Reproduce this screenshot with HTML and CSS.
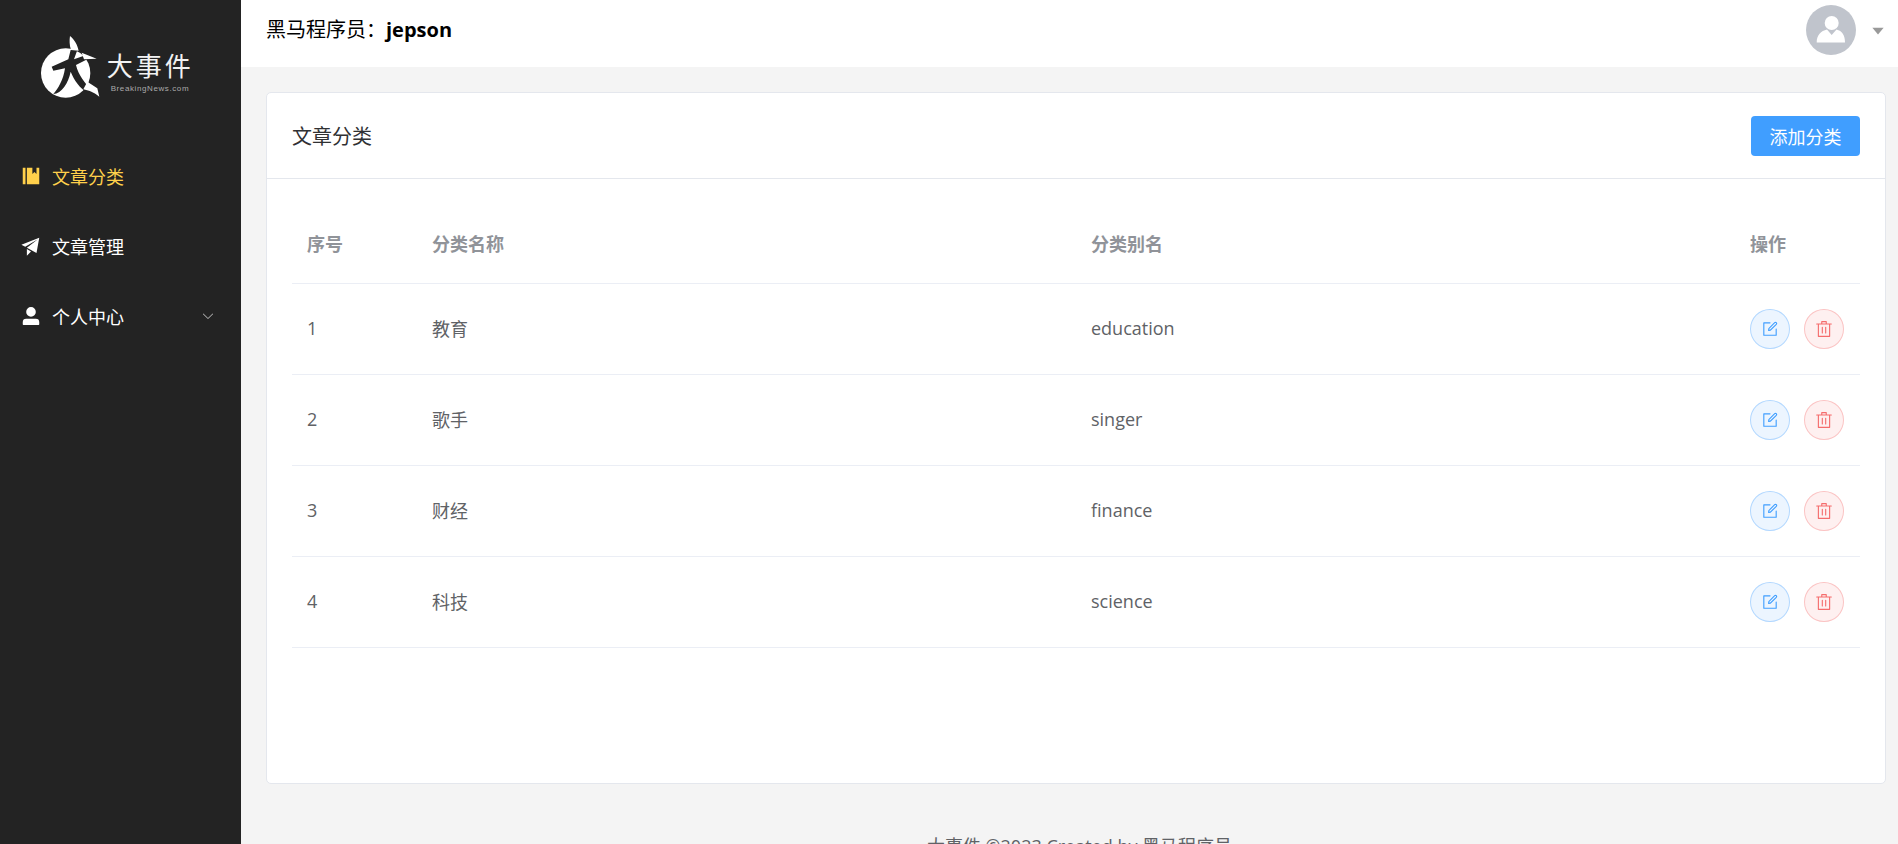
FILE: index.html
```html
<!DOCTYPE html>
<html lang="zh-CN">
<head>
<meta charset="utf-8">
<title>大事件</title>
<link rel="stylesheet" href="styles.css">
</head>
<body>
<div class="layout">
  <aside class="aside">
    <div class="logo">
      <svg class="logo-mark" viewBox="120 105 185 195" aria-hidden="true">
        <circle cx="197" cy="219" r="74" fill="#fff"/>
        <path d="M155 200 L205 178 L212 150 L232 150 L222 178 L250 168 L262 178 L228 195 C235 225 255 250 275 270 L262 278 C240 265 222 240 212 215 C205 250 185 280 160 282 C175 265 190 240 195 205 L160 212 Z" fill="#232323"/>
        <path d="M210 108 C225 120 232 135 236 152 L213 150 C208 135 208 120 210 108 Z M245 158 L290 176 L252 178 Z M262 245 L292 265 L298 290 C280 275 265 272 250 268 Z" fill="#fff"/>
      </svg>
      <div class="logo-text">
        <div class="logo-title">大事件</div>
        <div class="logo-sub">BreakingNews.com</div>
      </div>
    </div>
    <nav class="menu">
      <a class="menu-item active">
        <svg class="menu-icon" viewBox="0 0 1024 1024"><path fill="currentColor" d="M576 128v288l96-96 96 96V128h128v768H320V128zm-448 0h128v768H128z"/></svg>
        <span>文章分类</span>
      </a>
      <a class="menu-item">
        <svg class="menu-icon" viewBox="0 0 1024 1024"><path fill="currentColor" d="m64 448 832-320-128 704-446.08-243.328L832 192 242.816 545.472zm256 512V657.024L512 768z"/></svg>
        <span>文章管理</span>
      </a>
      <a class="menu-item">
        <svg class="menu-icon" viewBox="0 0 1024 1024"><path fill="currentColor" d="M288 320a224 224 0 1 0 448 0 224 224 0 1 0-448 0m544 608H160a32 32 0 0 1-32-32v-96a160 160 0 0 1 160-160h448a160 160 0 0 1 160 160v96a32 32 0 0 1-32 32z"/></svg>
        <span>个人中心</span>
        <svg class="menu-arrow" viewBox="0 0 1024 1024"><path fill="currentColor" d="M831.872 340.864 512 652.672 192.128 340.864a30.592 30.592 0 0 0-42.752 0 29.12 29.12 0 0 0 0 41.6L489.664 714.24a32 32 0 0 0 44.672 0l340.288-331.776a29.12 29.12 0 0 0 0-41.728 30.592 30.592 0 0 0-42.752 0z"/></svg>
      </a>
    </nav>
  </aside>
  <div class="main">
    <header class="topbar">
      <div class="who">黑马程序员：<strong>jepson</strong></div>
      <div class="account">
        <span class="avatar">
          <svg viewBox="0 0 50 50"><circle cx="25.7" cy="18" r="7" fill="#fff"/><path d="M10.7 37.5C10.7 30 15 26 21 24.5L25.7 30 30.5 24.5C36 26 39 30 39 37.5Z" fill="#fff"/></svg>
        </span>
        <svg class="caret" viewBox="0 0 1024 1024"><path fill="currentColor" d="m192 384 320 384 320-384z"/></svg>
      </div>
    </header>
    <main class="content">
      <section class="card">
        <div class="card-head">
          <span class="card-title">文章分类</span>
          <button class="btn-primary">添加分类</button>
        </div>
        <div class="card-body">
          <table class="table">
            <colgroup><col class="c-index"><col class="c-wide"><col class="c-wide"><col class="c-ops"></colgroup>
            <thead>
              <tr><th>序号</th><th>分类名称</th><th>分类别名</th><th>操作</th></tr>
            </thead>
            <tbody>
              <tr>
                <td>1</td><td>教育</td><td>education</td>
                <td><div class="ops">
                  <button class="circle edit"><svg viewBox="0 0 1024 1024"><path fill="currentColor" d="M832 512a32 32 0 1 1 64 0v352a32 32 0 0 1-32 32H160a32 32 0 0 1-32-32V160a32 32 0 0 1 32-32h352a32 32 0 0 1 0 64H192v640h640z"/><path fill="currentColor" d="m469.952 554.24 52.8-7.552L847.104 222.4a32 32 0 1 0-45.248-45.248L477.44 501.44l-7.552 52.8zm422.4-422.4a96 96 0 0 1 0 135.808l-331.84 331.84a32 32 0 0 1-18.112 9.088L436.8 623.68a32 32 0 0 1-36.224-36.224l15.104-105.6a32 32 0 0 1 9.024-18.112l331.904-331.84a96 96 0 0 1 135.744 0z"/></svg></button>
                  <button class="circle del"><svg viewBox="0 0 1024 1024"><path fill="currentColor" d="M160 256H96a32 32 0 0 1 0-64h256V95.936a32 32 0 0 1 32-32h256a32 32 0 0 1 32 32V192h256a32 32 0 1 1 0 64h-64v672a32 32 0 0 1-32 32H192a32 32 0 0 1-32-32zm448-64v-64H416v64zM224 896h576V256H224zm192-128a32 32 0 0 1-32-32V416a32 32 0 0 1 64 0v320a32 32 0 0 1-32 32m192 0a32 32 0 0 1-32-32V416a32 32 0 0 1 64 0v320a32 32 0 0 1-32 32"/></svg></button>
                </div></td>
              </tr>
              <tr>
                <td>2</td><td>歌手</td><td>singer</td>
                <td><div class="ops">
                  <button class="circle edit"><svg viewBox="0 0 1024 1024"><path fill="currentColor" d="M832 512a32 32 0 1 1 64 0v352a32 32 0 0 1-32 32H160a32 32 0 0 1-32-32V160a32 32 0 0 1 32-32h352a32 32 0 0 1 0 64H192v640h640z"/><path fill="currentColor" d="m469.952 554.24 52.8-7.552L847.104 222.4a32 32 0 1 0-45.248-45.248L477.44 501.44l-7.552 52.8zm422.4-422.4a96 96 0 0 1 0 135.808l-331.84 331.84a32 32 0 0 1-18.112 9.088L436.8 623.68a32 32 0 0 1-36.224-36.224l15.104-105.6a32 32 0 0 1 9.024-18.112l331.904-331.84a96 96 0 0 1 135.744 0z"/></svg></button>
                  <button class="circle del"><svg viewBox="0 0 1024 1024"><path fill="currentColor" d="M160 256H96a32 32 0 0 1 0-64h256V95.936a32 32 0 0 1 32-32h256a32 32 0 0 1 32 32V192h256a32 32 0 1 1 0 64h-64v672a32 32 0 0 1-32 32H192a32 32 0 0 1-32-32zm448-64v-64H416v64zM224 896h576V256H224zm192-128a32 32 0 0 1-32-32V416a32 32 0 0 1 64 0v320a32 32 0 0 1-32 32m192 0a32 32 0 0 1-32-32V416a32 32 0 0 1 64 0v320a32 32 0 0 1-32 32"/></svg></button>
                </div></td>
              </tr>
              <tr>
                <td>3</td><td>财经</td><td>finance</td>
                <td><div class="ops">
                  <button class="circle edit"><svg viewBox="0 0 1024 1024"><path fill="currentColor" d="M832 512a32 32 0 1 1 64 0v352a32 32 0 0 1-32 32H160a32 32 0 0 1-32-32V160a32 32 0 0 1 32-32h352a32 32 0 0 1 0 64H192v640h640z"/><path fill="currentColor" d="m469.952 554.24 52.8-7.552L847.104 222.4a32 32 0 1 0-45.248-45.248L477.44 501.44l-7.552 52.8zm422.4-422.4a96 96 0 0 1 0 135.808l-331.84 331.84a32 32 0 0 1-18.112 9.088L436.8 623.68a32 32 0 0 1-36.224-36.224l15.104-105.6a32 32 0 0 1 9.024-18.112l331.904-331.84a96 96 0 0 1 135.744 0z"/></svg></button>
                  <button class="circle del"><svg viewBox="0 0 1024 1024"><path fill="currentColor" d="M160 256H96a32 32 0 0 1 0-64h256V95.936a32 32 0 0 1 32-32h256a32 32 0 0 1 32 32V192h256a32 32 0 1 1 0 64h-64v672a32 32 0 0 1-32 32H192a32 32 0 0 1-32-32zm448-64v-64H416v64zM224 896h576V256H224zm192-128a32 32 0 0 1-32-32V416a32 32 0 0 1 64 0v320a32 32 0 0 1-32 32m192 0a32 32 0 0 1-32-32V416a32 32 0 0 1 64 0v320a32 32 0 0 1-32 32"/></svg></button>
                </div></td>
              </tr>
              <tr>
                <td>4</td><td>科技</td><td>science</td>
                <td><div class="ops">
                  <button class="circle edit"><svg viewBox="0 0 1024 1024"><path fill="currentColor" d="M832 512a32 32 0 1 1 64 0v352a32 32 0 0 1-32 32H160a32 32 0 0 1-32-32V160a32 32 0 0 1 32-32h352a32 32 0 0 1 0 64H192v640h640z"/><path fill="currentColor" d="m469.952 554.24 52.8-7.552L847.104 222.4a32 32 0 1 0-45.248-45.248L477.44 501.44l-7.552 52.8zm422.4-422.4a96 96 0 0 1 0 135.808l-331.84 331.84a32 32 0 0 1-18.112 9.088L436.8 623.68a32 32 0 0 1-36.224-36.224l15.104-105.6a32 32 0 0 1 9.024-18.112l331.904-331.84a96 96 0 0 1 135.744 0z"/></svg></button>
                  <button class="circle del"><svg viewBox="0 0 1024 1024"><path fill="currentColor" d="M160 256H96a32 32 0 0 1 0-64h256V95.936a32 32 0 0 1 32-32h256a32 32 0 0 1 32 32V192h256a32 32 0 1 1 0 64h-64v672a32 32 0 0 1-32 32H192a32 32 0 0 1-32-32zm448-64v-64H416v64zM224 896h576V256H224zm192-128a32 32 0 0 1-32-32V416a32 32 0 0 1 64 0v320a32 32 0 0 1-32 32m192 0a32 32 0 0 1-32-32V416a32 32 0 0 1 64 0v320a32 32 0 0 1-32 32"/></svg></button>
                </div></td>
              </tr>
            </tbody>
          </table>
        </div>
      </section>
      <footer class="footer">大事件 ©2023 Created by 黑马程序员</footer>
    </main>
  </div>
</div>
</body>
</html>
```
FILE: styles.css
```css
* { box-sizing: border-box; }
html, body { height: 100%; }
body {
  margin: 0;
  overflow: hidden;
  font-family: "Open Sans", "Noto Sans CJK SC", sans-serif;
  color: #303133;
  background: #f4f4f4;
}
.layout { display: flex; height: 844px; overflow: hidden; }

.aside { width: 241px; flex: none; background: #232323; color: #fff; }
.logo { display: flex; align-items: flex-start; gap: 5px; height: 120px; padding: 35px 0 0 40px; }
.logo-mark { width: 61.67px; height: 65px; flex: none; }
.logo-text { padding-top: 14px; }
.logo-title { font-family: "Noto Sans CJK SC", sans-serif; font-size: 26px; line-height: 32px; letter-spacing: 3px; color: #f2f2f2; white-space: nowrap; }
.logo-sub { font-family: "Liberation Sans", sans-serif; font-size: 8px; line-height: 10px; letter-spacing: .6px; color: #aaa; margin-top: 3px; padding-left: 4px; white-space: nowrap; }

.menu { display: flex; flex-direction: column; padding-top: 21px; }
.menu-item { display: flex; align-items: center; height: 70px; padding-left: 20px; font-size: 18px; color: #fff; }
.menu-item.active { color: #ffd04b; }
.menu-item span { font-family: "Noto Sans CJK SC", sans-serif; }
.menu-icon { width: 22px; height: 22px; margin-right: 10px; flex: none; }
.menu-arrow { width: 14px; height: 14px; margin-left: auto; margin-right: 26px; color: #bbb; }

.main { flex: 1; min-width: 0; display: flex; flex-direction: column; }
.topbar { height: 67px; flex: none; background: #fff; display: flex; align-items: flex-start; justify-content: space-between; padding: 5px 11px 0 25px; }
.who { font-size: 20px; line-height: 50px; color: #000; }
.who strong { font-weight: 700; }
.account { display: flex; align-items: center; gap: 13px; }
.avatar { width: 50px; height: 50px; border-radius: 50%; background: #c0c4cc; display: block; }
.avatar svg { display: block; width: 50px; height: 50px; }
.caret { width: 18px; height: 18px; color: #999; }

.content { flex: 1; min-height: 0; padding: 25px 12px 0 25px; }
.card { height: 692px; background: #fff; border: 1px solid #e4e7ed; border-radius: 5px; }
.card-head { height: 86px; display: flex; align-items: center; justify-content: space-between; padding: 0 25px; border-bottom: 1px solid #e4e7ed; }
.card-title { font-family: "Noto Sans CJK SC", sans-serif; font-size: 20px; color: #303133; }
.btn-primary { width: 109px; height: 40px; border: 0; border-radius: 4px; background: #409eff; color: #fff; font-family: "Noto Sans CJK SC", sans-serif; font-size: 18px; padding: 0; }
.card-body { padding: 24px 25px; }

.table { width: 100%; table-layout: fixed; border-collapse: collapse; font-size: 18px; color: #606266; }
.c-index { width: 125px; }
.c-ops { width: 125px; }
.table th, .table td { text-align: left; padding: 0 15px; border-bottom: 1px solid #ebeef5; }
.table th { height: 80px; color: #909399; font-weight: 700; }
.table td { height: 91px; padding-bottom: 2px; }
.ops { display: flex; gap: 14.5px; padding-top: 2px; }
.circle { width: 39.5px; height: 40px; border-radius: 50%; display: flex; align-items: center; justify-content: center; padding: 0; border: 1px solid; flex: none; }
.circle svg { width: 18px; height: 18px; }
.edit { background: #ecf5ff; border-color: #b3d8ff; color: #409eff; }
.del { background: #fef0f0; border-color: #fbc4c4; color: #f56c6c; }

.footer { padding: 50px 0 0 7px; text-align: center; font-size: 18px; color: #606266; line-height: 24px; white-space: nowrap; }
```
